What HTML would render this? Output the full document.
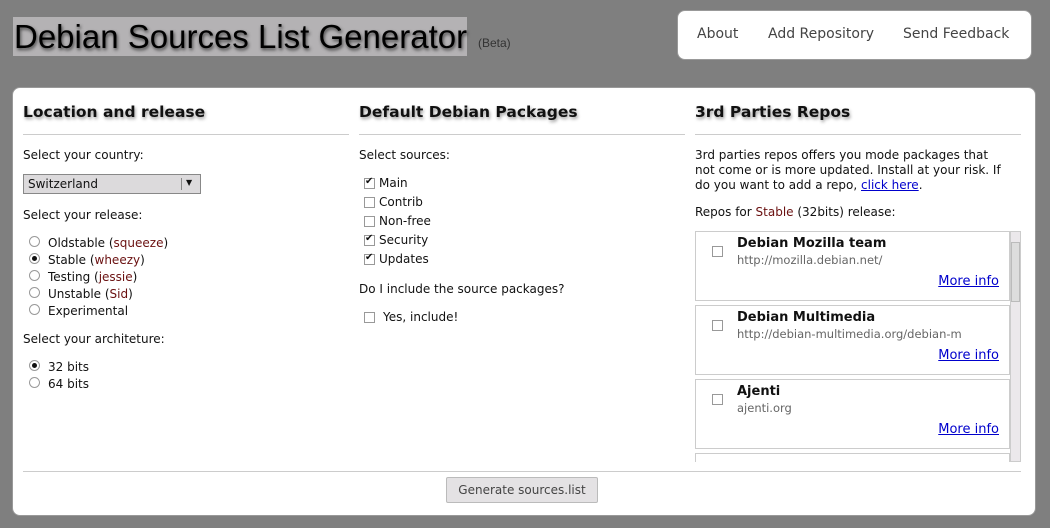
<!DOCTYPE html>
<html><head><style>
*{margin:0;padding:0;box-sizing:border-box}
body{width:1050px;height:528px;background:#7f7f7f;font-family:"DejaVu Sans",sans-serif;font-size:12px;color:#111;position:relative;overflow:hidden}
.a{position:absolute;white-space:nowrap}
.title{left:13px;top:17px;width:454px;height:39px;background:#b4b2b4;font-family:"Liberation Sans",sans-serif;font-size:33px;line-height:39px;color:#000;text-shadow:1px 2px 3px #444;padding-left:1px}
.beta{left:478px;top:36px;font-family:"Liberation Sans",sans-serif;font-size:12px;color:#333}
.nav{left:677px;top:10px;width:355px;height:50px;background:#fff;border:1px solid #999;border-radius:8px;font-size:14px;color:#444}
.nav span{position:absolute;top:15px}
.panel{left:12px;top:87px;width:1024px;height:429px;background:#fff;border-radius:8px;border:1px solid #999}
h2{position:absolute;font-size:15.5px;font-weight:bold;color:#111;text-shadow:1px 2px 3px #999;white-space:nowrap}
.rule{position:absolute;height:1px;background:#ccc}
.r{color:#6a1010}
.cb{position:absolute;width:11px;height:11px;border:1px solid #999;background:#fff}
.cb.on::after{content:"✔";position:absolute;left:0px;top:-3px;font-size:10px;color:#111}
.rd{position:absolute;width:11px;height:11px;border:1px solid #999;border-radius:50%;background:#fff}
.rd.on::after{content:"";position:absolute;left:2px;top:2px;width:5px;height:5px;border-radius:50%;background:#111}
.item{position:absolute;left:695px;width:315px;height:70px;border:1px solid #ccc;background:#fff}
.item b{position:absolute;left:41px;top:4px;font-size:13px}
.item .u{position:absolute;left:41px;top:21px;font-size:11.5px;color:#666}
.item a{position:absolute;right:10px;top:42px;color:#00c;font-size:13px;text-decoration:underline}
.item .cb{left:16px;top:14px}
</style></head><body>
<div class="a title">Debian Sources List Generator</div>
<div class="a beta">(Beta)</div>
<div class="a nav"><span style="left:19px">About</span><span style="left:90px">Add Repository</span><span style="left:225px">Send Feedback</span></div>
<div class="a panel"></div>

<h2 style="left:23px;top:103px">Location and release</h2>
<div class="rule" style="left:23px;top:134px;width:326px"></div>
<div class="a" style="left:23px;top:148px">Select your country:</div>
<div class="a" style="left:23px;top:174px;width:178px;height:20px;background:#dcdadc;border:1px solid #888;padding:2px 4px;font-size:12px">Switzerland<span style="position:absolute;left:157px;top:3px;width:1px;height:12px;background:#888"></span><span style="position:absolute;left:162px;top:3px;font-size:8px">▼</span></div>
<div class="a" style="left:23px;top:208px">Select your release:</div>
<div class="rd" style="left:29px;top:236px"></div><div class="a" style="left:48px;top:236px">Oldstable (<span class="r">squeeze</span>)</div>
<div class="rd on" style="left:29px;top:253px"></div><div class="a" style="left:48px;top:253px">Stable (<span class="r">wheezy</span>)</div>
<div class="rd" style="left:29px;top:270px"></div><div class="a" style="left:48px;top:270px">Testing (<span class="r">jessie</span>)</div>
<div class="rd" style="left:29px;top:287px"></div><div class="a" style="left:48px;top:287px">Unstable (<span class="r">Sid</span>)</div>
<div class="rd" style="left:29px;top:304px"></div><div class="a" style="left:48px;top:304px">Experimental</div>
<div class="a" style="left:23px;top:332px">Select your architeture:</div>
<div class="rd on" style="left:29px;top:360px"></div><div class="a" style="left:48px;top:360px">32 bits</div>
<div class="rd" style="left:29px;top:377px"></div><div class="a" style="left:48px;top:377px">64 bits</div>

<h2 style="left:359px;top:103px">Default Debian Packages</h2>
<div class="rule" style="left:359px;top:134px;width:326px"></div>
<div class="a" style="left:359px;top:148px">Select sources:</div>
<div class="cb on" style="left:364px;top:178px"></div><div class="a" style="left:379px;top:176px">Main</div>
<div class="cb" style="left:364px;top:197px"></div><div class="a" style="left:379px;top:195px">Contrib</div>
<div class="cb" style="left:364px;top:216px"></div><div class="a" style="left:379px;top:214px">Non-free</div>
<div class="cb on" style="left:364px;top:235px"></div><div class="a" style="left:379px;top:233px">Security</div>
<div class="cb on" style="left:364px;top:254px"></div><div class="a" style="left:379px;top:252px">Updates</div>
<div class="a" style="left:359px;top:282px">Do I include the source packages?</div>
<div class="cb" style="left:364px;top:312px"></div><div class="a" style="left:383px;top:310px">Yes, include!</div>

<h2 style="left:695px;top:103px">3rd Parties Repos</h2>
<div class="rule" style="left:695px;top:134px;width:326px"></div>
<div class="a" style="left:695px;top:148px;line-height:15px;white-space:normal;width:312px">3rd parties repos offers you mode packages that not come or is more updated. Install at your risk. If do you want to add a repo, <span style="color:#00c;text-decoration:underline">click here</span>.</div>
<div class="a" style="left:695px;top:205px">Repos for <span class="r">Stable</span> (32bits) release:</div>
<div class="item" style="top:231px"><div class="cb"></div><b>Debian Mozilla team</b><div class="u">http://mozilla.debian.net/</div><a>More info</a></div>
<div class="item" style="top:305px"><div class="cb"></div><b>Debian Multimedia</b><div class="u">http://debian-multimedia.org/debian-m</div><a>More info</a></div>
<div class="item" style="top:379px"><div class="cb"></div><b>Ajenti</b><div class="u">ajenti.org</div><a>More info</a></div>
<div class="a" style="left:695px;top:453px;width:315px;height:9px;border:1px solid #ccc;border-bottom:none"></div>
<div class="a" style="left:1010px;top:231px;width:11px;height:231px;background:#ebe8eb;border:1px solid #ccc"></div>
<div class="a" style="left:1011px;top:242px;width:9px;height:60px;background:#ddd;border:1px solid #bbb"></div>

<div class="rule" style="left:23px;top:471px;width:998px"></div>
<div class="a" style="left:446px;top:477px;width:152px;height:26px;background:#e4e2e4;border:1px solid #bbb;border-radius:2px;text-align:center;line-height:24px;color:#444">Generate sources.list</div>
</body></html>
